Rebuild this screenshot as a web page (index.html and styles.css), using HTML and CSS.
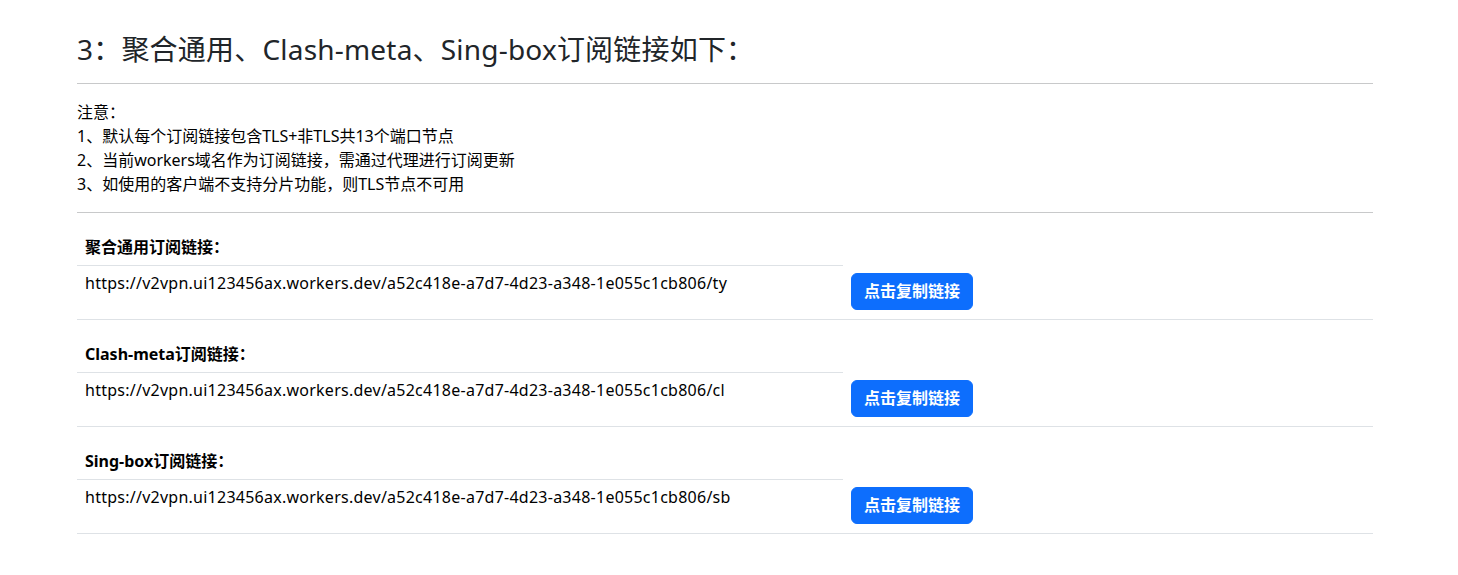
FILE: index.html
```html
<!DOCTYPE html>
<html lang="zh-CN">
<head>
<meta charset="utf-8">
<title>订阅链接</title>
<link rel="stylesheet" href="styles.css">
</head>
<body>
<main class="container">
  <h3 class="title">3：聚合通用、Clash-meta、Sing-box订阅链接如下：</h3>
  <hr class="rule">
  <p class="notes">注意：<br>1、默认每个订阅链接包含TLS+非TLS共13个端口节点<br>2、当前workers域名作为订阅链接，需通过代理进行订阅更新<br>3、如使用的客户端不支持分片功能，则TLS节点不可用</p>
  <hr class="rule">
  <div class="subs">
    <div class="sub-row">
      <div class="sub-info">
        <div class="sub-label">聚合通用订阅链接：</div>
        <div class="sub-url">https://v2vpn.ui123456ax.workers.dev/a52c418e-a7d7-4d23-a348-1e055c1cb806/ty</div>
      </div>
      <div class="sub-action"><button class="btn">点击复制链接</button></div>
    </div>
    <div class="sub-row">
      <div class="sub-info">
        <div class="sub-label">Clash-meta订阅链接：</div>
        <div class="sub-url">https://v2vpn.ui123456ax.workers.dev/a52c418e-a7d7-4d23-a348-1e055c1cb806/cl</div>
      </div>
      <div class="sub-action"><button class="btn">点击复制链接</button></div>
    </div>
    <div class="sub-row">
      <div class="sub-info">
        <div class="sub-label">Sing-box订阅链接：</div>
        <div class="sub-url">https://v2vpn.ui123456ax.workers.dev/a52c418e-a7d7-4d23-a348-1e055c1cb806/sb</div>
      </div>
      <div class="sub-action"><button class="btn">点击复制链接</button></div>
    </div>
  </div>
</main>
</body>
</html>
```

FILE: styles.css
```css
* { box-sizing: border-box; }
html, body { margin: 0; padding: 0; background: #fff; }
body {
  font-family: "Noto Sans", "Noto Sans CJK SC", sans-serif;
  font-size: 16px;
  line-height: 24px;
  color: #212529;
}
.container {
  width: 1296px;
  margin-left: 77px;
  padding-top: 32px;
}
.title {
  margin: 0;
  font-size: 28px;
  font-weight: 400;
  line-height: 34px;
  letter-spacing: 0.2px;
}
.rule {
  margin: 16px 0;
  border: 0;
  border-top: 1px solid #c8c9ca;
}
.title + .rule { margin-top: 17px; }
.notes {
  margin: 0;
  font-size: 16px;
  color: #000;
}
.sub-row {
  display: flex;
  border-bottom: 1px solid #dee2e6;
}
.rule + .subs { margin-top: -16px; }
.sub-info {
  width: 766px;
}
.sub-label {
  padding: 22px 8px 6px;
  font-weight: 700;
  font-size: 16px;
  color: #000;
  border-bottom: 1px solid #dee2e6;
}
.sub-url {
  padding: 5px 8px 24px;
  font-size: 16px;
  letter-spacing: 0.25px;
  color: #000;
}
.sub-action {
  display: flex;
  align-items: flex-end;
  padding: 0 0 9px 8px;
}
.btn {
  font-family: inherit;
  font-size: 16px;
  font-weight: 700;
  line-height: 23px;
  color: #fff;
  background: #0d6efd;
  border: 1px solid #0d6efd;
  border-radius: 6px;
  padding: 6px 12px;
  cursor: pointer;
}
```
